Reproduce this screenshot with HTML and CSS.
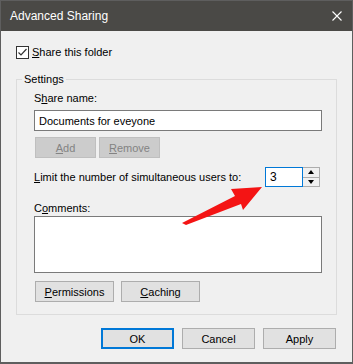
FILE: index.html
```html
<!DOCTYPE html>
<html lang="en">
<head>
<meta charset="UTF-8">
<meta name="viewport" content="width=device-width, initial-scale=1.0">
<title>Advanced Sharing</title>
<link rel="stylesheet" href="styles.css">
</head>
<body>
<div class="window">
  <div class="titlebar">
    <span class="title">Advanced Sharing</span>
    <svg class="close" width="10" height="10" viewBox="0 0 10 10"><path d="M0.5 0.5L9.5 9.5M9.5 0.5L0.5 9.5" stroke="#fff" stroke-width="1.1" fill="none"/></svg>
  </div>
  <div class="content">
    <label class="check">
      <span class="box"><svg width="11" height="11" viewBox="0 0 11 11"><path d="M1.5 5.5L4 8L9.5 2" stroke="#333" stroke-width="1.2" fill="none"/></svg></span>
      <span><u>S</u>hare this folder</span>
    </label>
    <fieldset class="group">
      <legend>Settings</legend>
      <div class="label">S<u>h</u>are name:</div>
      <input class="field" type="text" value="Documents for eveyone">
      <div class="btn-row">
        <button class="btn" disabled><u>A</u>dd</button>
        <button class="btn" disabled><u>R</u>emove</button>
      </div>
      <div class="limit-row">
        <span class="label"><u>L</u>imit the number of simultaneous users to:</span>
        <div class="spin">
          <input class="spin-input" type="text" value="3">
          <div class="spin-btns">
            <span class="spin-up"></span>
            <span class="spin-down"></span>
          </div>
        </div>
      </div>
      <div class="label comments">C<u>o</u>mments:</div>
      <textarea class="area"></textarea>
      <div class="btn-row wide">
        <button class="btn big"><u>P</u>ermissions</button>
        <button class="btn big"><u>C</u>aching</button>
      </div>
    </fieldset>
    <div class="footer">
      <button class="btn foot default">OK</button>
      <button class="btn foot">Cancel</button>
      <button class="btn foot">Apply</button>
    </div>
  </div>
  <svg class="arrow" width="353" height="364" viewBox="0 0 353 364">
    <polygon points="182,223 235,196 231,189 262,187 243,210 241,204 186,225" fill="#f41414"/>
  </svg>
</div>
</body>
</html>
```

FILE: styles.css
```css
*{box-sizing:border-box;}
body{margin:0;font-family:"Liberation Sans",Arial,sans-serif;font-size:11px;color:#000;}
.window{position:relative;width:353px;height:364px;border:1px solid #5e5e5e;border-bottom-width:2px;background:#f0f0f0;overflow:hidden;}
.titlebar{height:30px;background:#4a4946;display:flex;align-items:center;justify-content:space-between;padding:0 10px 0 9px;}
.title{color:#fff;font-size:12px;}
.close{display:block;margin-top:-1px;}
.content{padding:15px 15px 0 15px;}
.check{display:flex;align-items:center;gap:3px;height:13px;line-height:13px;}
.box{width:13px;height:13px;border:1px solid #333;background:#fff;display:flex;align-items:center;justify-content:center;}
.box svg{display:block;}
.group{margin:12px 0 0 0;padding:4px 14px 12px 17px;border:1px solid #dcdcdc;}
.group legend{padding:0 2px;margin-left:-12px;line-height:16px;}
.label{line-height:15px;}
.field{display:block;width:288px;height:21px;margin:4px 0 0 0;padding:0 4px;border:1px solid #7a7a7a;background:#fff;font:inherit;color:#000;outline:none;}
.btn-row{display:flex;gap:3px;margin-top:6px;padding-left:1px;}
.btn-row.wide{gap:7px;margin-top:8px;}
.btn{height:21px;width:61px;padding:0;border:1px solid #adadad;background:#e1e1e1;font:inherit;color:#000;}
.btn:disabled{background:#cccccc;border-color:#bfbfbf;color:#838383;}
.btn.big{width:79px;}
.limit-row{display:flex;align-items:center;margin-top:9px;height:20px;}
.spin{display:flex;margin-left:auto;margin-right:2px;}
.spin-input{width:38px;height:20px;padding:0 0 0 4px;border:1px solid #0078d7;background:#fff;font:inherit;font-size:12px;color:#000;outline:none;}
.spin-btns{width:17px;height:20px;border:1px solid #adadad;border-left:none;display:flex;flex-direction:column;background:#f0f0f0;}
.spin-up,.spin-down{flex:1;display:flex;align-items:center;justify-content:center;}
.spin-down{border-top:1px solid #adadad;}
.spin-up::before{content:"";border-left:3.5px solid transparent;border-right:3.5px solid transparent;border-bottom:4px solid #000;}
.spin-down::before{content:"";border-left:3.5px solid transparent;border-right:3.5px solid transparent;border-top:4px solid #000;}
.comments{margin-top:14px;}
.area{display:block;width:288px;height:57px;margin:0;padding:2px 4px;border:1px solid #7a7a7a;background:#fff;resize:none;font:inherit;outline:none;}
.footer{display:flex;justify-content:flex-end;gap:8px;margin-top:13px;padding-right:1px;}
.btn.foot{width:73px;height:21px;}
.btn.default{border:2px solid #0078d7;}
.arrow{position:absolute;left:-1px;top:-1px;pointer-events:none;}
```
